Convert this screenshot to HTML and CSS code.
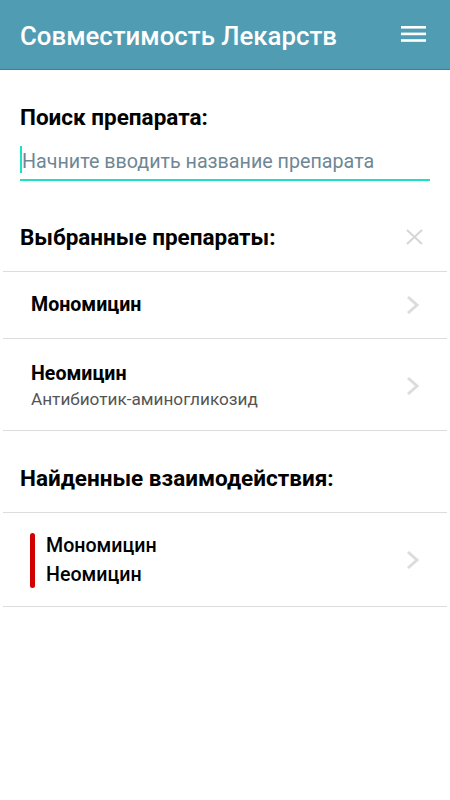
FILE: index.html
```html
<!DOCTYPE html>
<html lang="ru">
<head>
  <meta charset="UTF-8">
  <title>Совместимость Лекарств</title>
  <link rel="stylesheet" href="styles.css">
</head>
<body>

  <header class="app-bar">
    <h1 class="app-title">Совместимость Лекарств</h1>
    <svg class="menu-icon" width="25" height="16" viewBox="0 0 25 16">
      <rect x="0" y="0" width="25" height="2.6" fill="#fff"/>
      <rect x="0" y="6.6" width="25" height="2.6" fill="#fff"/>
      <rect x="0" y="13.2" width="25" height="2.6" fill="#fff"/>
    </svg>
  </header>

  <section class="search">
    <h2 class="section-title">Поиск препарата:</h2>
    <div class="search-field">
      <span class="caret"></span>
      <span class="placeholder">Начните вводить название препарата</span>
    </div>
  </section>

  <section>
    <div class="section-head">
      <h2 class="section-title">Выбранные препараты:</h2>
      <svg class="clear-icon" width="17" height="16" viewBox="0 0 17 16">
        <path d="M1 1 L16 15 M16 1 L1 15" stroke="#d6d6d6" stroke-width="2" fill="none"/>
      </svg>
    </div>
    <ul class="list">
      <li class="list-item">
        <div class="drug">
          <div class="drug-name">Мономицин</div>
        </div>
        <svg class="chevron" width="13" height="20" viewBox="0 0 13 20">
          <polyline points="2,2 11,10 2,18" stroke="#dcdcdc" stroke-width="3" fill="none"/>
        </svg>
      </li>
      <li class="list-item tall">
        <div class="drug">
          <div class="drug-name">Неомицин</div>
          <div class="drug-type">Антибиотик-аминогликозид</div>
        </div>
        <svg class="chevron" width="13" height="20" viewBox="0 0 13 20">
          <polyline points="2,2 11,10 2,18" stroke="#dcdcdc" stroke-width="3" fill="none"/>
        </svg>
      </li>
    </ul>
  </section>

  <section>
    <div class="section-head compact">
      <h2 class="section-title">Найденные взаимодействия:</h2>
    </div>
    <ul class="list">
      <li class="list-item interaction">
        <span class="level level-danger"></span>
        <div class="pair">
          <div>Мономицин</div>
          <div>Неомицин</div>
        </div>
        <svg class="chevron" width="13" height="20" viewBox="0 0 13 20">
          <polyline points="2,2 11,10 2,18" stroke="#dcdcdc" stroke-width="3" fill="none"/>
        </svg>
      </li>
    </ul>
  </section>

</body>
</html>
```

FILE: styles.css
```css
body {
  margin: 0;
  font-family: Roboto, "Noto Sans", sans-serif;
  background: #fff;
  color: #000;
}

h1, h2 {
  margin: 0;
}

.app-bar {
  height: 70px;
  padding: 3px 24px 0 20px;
  box-sizing: border-box;
  background: #509db3;
  border-bottom: 1px solid #1f8ba2;
  display: flex;
  align-items: center;
  justify-content: space-between;
}

.app-title {
  color: #fff;
  font-size: 25.8px;
  font-weight: 500;
}

.menu-icon {
  margin-top: -4px;
}

.section-title {
  font-size: 22.5px;
  font-weight: 700;
  line-height: 24px;
}

.search {
  padding: 35px 20px 0;
}

.search-field {
  margin-top: 17px;
  display: flex;
  align-items: flex-start;
  padding-bottom: 3px;
  border-bottom: 2px solid #1ee0c2;
}

.caret {
  width: 2px;
  height: 27px;
  background: #1ee0c2;
}

.placeholder {
  padding-top: 2px;
  font-size: 19.7px;
  line-height: 28px;
  color: #6f8795;
}

.section-head {
  padding: 44px 27px 22px 20px;
  display: flex;
  align-items: center;
  justify-content: space-between;
}

.section-head.compact {
  padding-top: 35px;
}

.list {
  list-style: none;
  margin: 0 3px;
  padding: 0;
}

.list-item {
  border-top: 1px solid #dcdcdc;
  display: flex;
  align-items: center;
  justify-content: space-between;
  padding: 22px 28px 22px 28px;
}

.list-item:last-child {
  border-bottom: 1px solid #dcdcdc;
}

.list-item.tall {
  padding: 24px 28px 21px 28px;
}

.drug-name {
  font-size: 19.6px;
  font-weight: 700;
  line-height: 22px;
}

.drug-type {
  margin-top: 4px;
  font-size: 17.2px;
  line-height: 20px;
  color: #555;
}

.interaction {
  padding: 18px 28px 17px 27px;
}

.level {
  width: 5px;
  height: 55px;
  border-radius: 3px;
  margin-right: 11px;
}

.level-danger {
  background: #d10000;
}

.pair {
  flex: 1;
  font-size: 19.6px;
  font-weight: 500;
  line-height: 29px;
}
```
